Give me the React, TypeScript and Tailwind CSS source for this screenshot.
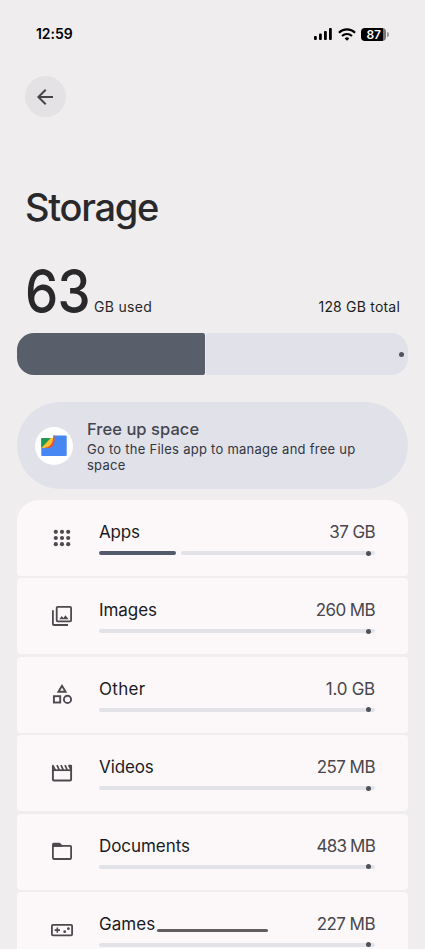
import type { ReactNode } from "react";
import { MdArrowBack } from "react-icons/md";

type Row = {
  name: string;
  nameClass: string;
  size: string;
  sizeClass: string;
  icon: ReactNode;
  used?: boolean;
};

const AppsIcon = () => (
  <svg viewBox="0 0 24 24" className="h-6 w-6" fill="currentColor">
    {[5.8, 12, 18.2].map((y) =>
      [5.8, 12, 18.2].map((x) => <circle key={`${x}-${y}`} cx={x} cy={y} r="2.1" />),
    )}
  </svg>
);

const ImagesIcon = () => (
  <svg viewBox="0 0 24 24" className="h-6 w-6" fill="none" stroke="currentColor" strokeWidth="1.8" strokeLinejoin="round">
    <rect x="6.7" y="2.9" width="14.4" height="14.4" rx="1" />
    <path d="M2.9 6.2V20a1 1 0 0 0 1 1H18" />
    <path d="M9.3 15.2l2.4-3.1 1.7 2 2.1-2.9 3.1 4z" fill="currentColor" stroke="none" />
  </svg>
);

const OtherIcon = () => (
  <svg viewBox="0 0 24 24" className="h-6 w-6" fill="none" stroke="currentColor" strokeWidth="1.9">
    <path d="M12 3.8L8.4 9.7h7.2z" />
    <rect x="3.9" y="14.2" width="6.3" height="6.3" />
    <circle cx="17.5" cy="17.4" r="3.6" />
  </svg>
);

const VideosIcon = () => (
  <svg viewBox="0 0 24 24" className="h-6 w-6" fill="none" stroke="currentColor" strokeWidth="1.9" strokeLinejoin="round">
    <path d="M3.4 4.2A1.3 1.3 0 0 0 2.9 5.4V18.5a1 1 0 0 0 1 1H20.1a1 1 0 0 0 1-1V4.8H18.6" />
    <path d="M3 9.2H21" strokeWidth="1.7" />
    <path d="M3 4.6l2.3 4.6M7 4.2l2.3 5M11 4.2l2.3 5M15 4.2l2.3 5M18.8 4.2l2 4.2" strokeWidth="1.7" />
  </svg>
);

const DocumentsIcon = () => (
  <svg viewBox="0 0 24 24" className="h-6 w-6" fill="none" stroke="currentColor" strokeWidth="1.8" strokeLinejoin="round">
    <path d="M2.9 6.9V19.1a.9.9 0 0 0 .9.9H20.2a.9.9 0 0 0 .9-.9V7.8a.9.9 0 0 0-.9-.9z" />
    <path d="M2.9 7V5.5a.9.9 0 0 1 .9-.9h5.6l2.3 2.3z" fill="currentColor" />
  </svg>
);

const GamesIcon = () => (
  <svg viewBox="0 0 24 24" className="h-6 w-6" fill="none" stroke="currentColor" strokeWidth="1.8">
    <rect x="1.9" y="6.9" width="20.2" height="10.4" rx="1" />
    <path d="M4.6 12.1h5.4M7.3 9.4v5.4" strokeWidth="1.6" />
    <circle cx="14.7" cy="13.7" r="1.4" fill="currentColor" stroke="none" />
    <circle cx="18.4" cy="10.7" r="1.4" fill="currentColor" stroke="none" />
  </svg>
);

const FilesLogo = () => (
  <svg viewBox="0 0 26 22" className="h-[22px] w-[26px]">
    <rect width="25.4" height="20.6" y="0.4" x="0.3" rx="1" fill="#4687f4" />
    <path d="M0-.2H12.5V3.1H0z" fill="white" />
    <path d="M.3 13V4Q.3 3.1 1.2 3.1H11.5L8 8z" fill="#219653" />
    <path d="M.3 13L9.8 3.1H12.3V5.3Q11.5 12.8 2.5 13z" fill="#fbc02d" />
    <path d="M3.5 13.2Q11.5 11.5 12.3 3V.4H13.5V6Q13 13.2 6 13.2z" fill="#e9532b" />
  </svg>
);

const rows: Row[] = [
  { name: "Apps", nameClass: "tracking-[-0.15px]", size: "37 GB", sizeClass: "tracking-[-0.6px]", icon: <AppsIcon />, used: true },
  { name: "Images", nameClass: "tracking-[-0.05px]", size: "260 MB", sizeClass: "tracking-[-0.6px]", icon: <ImagesIcon /> },
  { name: "Other", nameClass: "tracking-[0.3px]", size: "1.0 GB", sizeClass: "tracking-[-0.25px]", icon: <OtherIcon /> },
  { name: "Videos", nameClass: "tracking-[-0.1px]", size: "257 MB", sizeClass: "tracking-[-0.55px]", icon: <VideosIcon /> },
  { name: "Documents", nameClass: "tracking-[-0.05px]", size: "483 MB", sizeClass: "tracking-[-0.8px]", icon: <DocumentsIcon /> },
  { name: "Games", nameClass: "tracking-[0.05px]", size: "227 MB", sizeClass: "tracking-[-0.55px]", icon: <GamesIcon /> },
];

function StatusBar() {
  return (
    <header className="flex h-[68px] shrink-0 items-center justify-between pl-9 pr-[36px]">
      <span className="text-[14px] font-semibold leading-5 tracking-[-0.05px] text-black">12:59</span>
      <div className="flex items-center text-black">
        <svg viewBox="0 0 18 12" className="h-3 w-[18px]" fill="currentColor">
          <rect x="0" y="8" width="2.8" height="4" rx="1" />
          <rect x="5" y="5.5" width="2.8" height="6.5" rx="1" />
          <rect x="10" y="3" width="2.8" height="9" rx="1" />
          <rect x="15" y="0" width="2.8" height="12" rx="1" />
        </svg>
        <svg viewBox="0 0 18 13" className="ml-1.5 h-[13px] w-[18px]" fill="none" stroke="currentColor" strokeWidth="2.1">
          <path d="M.9 4.7a11.6 11.6 0 0 1 16.2 0" />
          <path d="M4 8a7.2 7.2 0 0 1 10 0" />
          <path d="M9 12.8L6.7 10.4a3.3 3.3 0 0 1 4.6 0z" fill="currentColor" stroke="none" />
        </svg>
        <div className="ml-[5px] flex h-[13px] w-[25px] items-center justify-center rounded-[4px] bg-[linear-gradient(90deg,#000_87%,#777_87%)] pt-px text-[12px] font-semibold leading-none tracking-[-0.4px] text-white">
          87
        </div>
        <div className="ml-px h-[5px] w-[2px] rounded-r-sm bg-[#999]" />
      </div>
    </header>
  );
}

function StorageRow({ row }: { row: Row }) {
  return (
    <li className="flex h-[76px] shrink-0 rounded-[4px] bg-[#fcf8fa] pl-[33px] pr-[33px] first:rounded-t-[22px]">
      <div className="mt-[25.6px] h-6 w-6 text-[#4c4a4e]">{row.icon}</div>
      <div className="ml-[25px] flex flex-1 flex-col pt-5">
        <div className="flex h-6 items-center justify-between text-[17px] leading-6">
          <span className={`text-[#1b1b1e] ${row.nameClass}`}>{row.name}</span>
          <span className={`text-[#49474b] ${row.sizeClass}`}>{row.size}</span>
        </div>
        <div className="mt-[7px] flex h-1 gap-[5px]">
          {row.used && <div className="w-[77px] rounded-full bg-[#535a69]" />}
          <div className="flex flex-1 items-center justify-end rounded-full bg-[#e2e2e9] pr-1">
            <div className="h-[5px] w-[5px] shrink-0 rounded-full bg-[#4f5159]" />
          </div>
        </div>
      </div>
    </li>
  );
}

export default function App() {
  return (
    <main className="relative flex h-[949px] w-[425px] flex-col overflow-hidden bg-[#efedee] font-['Inter','Liberation_Sans',sans-serif]">
      <StatusBar />
      <button aria-label="Back" className="ml-[25px] mt-2 flex h-[41px] w-[41px] shrink-0 items-center justify-center rounded-full bg-[#e4e2e5] pr-px text-[#454448]">
        <MdArrowBack className="h-6 w-6" />
      </button>
      <h1 className="ml-[25px] mt-[66px] h-12 shrink-0 text-[38px] font-medium leading-[48px] tracking-[-1.3px] text-[#29292b]">Storage</h1>
      <div className="flex h-[102px] shrink-0 justify-between pl-[25px] pr-[25px] pt-[29px]">
        <div className="flex items-start">
          <span className="w-[69px] origin-left scale-x-[.88] text-[60px] font-[550] leading-[62px] tracking-[-1px] text-[#29292b]">63</span>
          <span className="mt-[37px] text-[14px] leading-5 tracking-[0.32px] text-[#29292b]">GB used</span>
        </div>
        <span className="mt-[37px] text-[14px] leading-5 tracking-[0.2px] text-[#1d1d20]">128 GB total</span>
      </div>
      <div className="mx-[17px] flex h-[42px] shrink-0 gap-px">
        <div className="w-[187.5px] rounded-l-[17px] rounded-r-[2px] bg-[#595e6b]" />
        <div className="flex flex-1 items-center justify-end rounded-l-[2px] rounded-r-[17px] bg-[#e0e1e9] pr-1">
          <div className="h-[5px] w-[5px] rounded-full bg-[#4f535f]" />
        </div>
      </div>
      <section className="mx-[17px] mt-[27px] flex h-[87px] shrink-0 rounded-[44px] bg-[#e0e1e9] pl-[18px]">
        <div className="mt-[25px] flex h-[38px] w-[38px] items-center justify-center rounded-full bg-white">
          <FilesLogo />
        </div>
        <div className="ml-3.5 pt-4">
          <h2 className="text-[16.5px] font-medium leading-[22px] tracking-[0.05px] text-[#45464f]">Free up space</h2>
          <p className="pt-px text-[13px] leading-4 tracking-[0.26px] text-[#34363e]">
            Go to the Files app to manage and free up
            <br />
            space
          </p>
        </div>
      </section>
      <ul className="mx-[17px] mt-[11px] flex flex-col gap-[2.4px]">
        {rows.map((row) => (
          <StorageRow key={row.name} row={row} />
        ))}
      </ul>
      <div className="absolute left-[157px] top-[929px] h-[3px] w-[111px] rounded-full bg-[#605e60]" />
    </main>
  );
}
